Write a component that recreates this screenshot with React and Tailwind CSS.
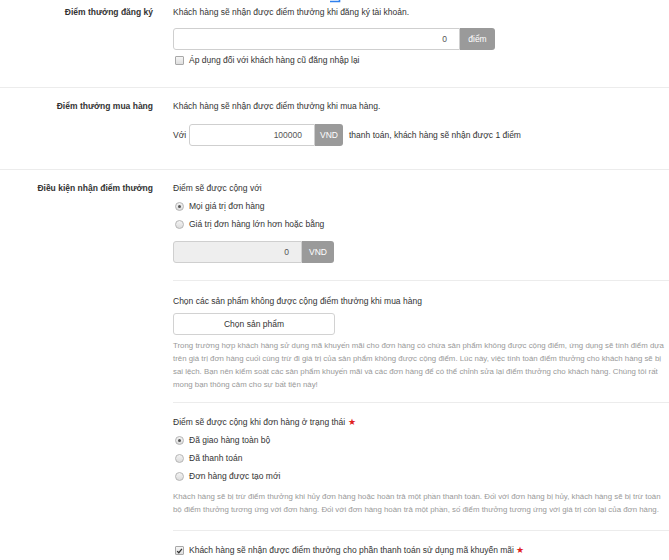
import React from "react";

function Radio({ checked, children }) {
  return (
    <label className="flex items-center h-[13px] gap-[5px]">
      <span className="w-[9px] h-[9px] ml-[2px] rounded-full border border-[#b5b5b5] bg-gradient-to-b from-[#f4f4f4] to-[#dcdcdc] flex items-center justify-center">
        {checked && <span className="w-[3px] h-[3px] rounded-full bg-[#555]" />}
      </span>
      <span>{children}</span>
    </label>
  );
}

function Check({ checked, children }) {
  return (
    <label className="flex items-center h-[13px] gap-[5px]">
      <span className="w-[9px] h-[9px] ml-[2px] rounded-[1px] border border-[#a8a8a8] bg-gradient-to-b from-[#f6f6f6] to-[#dedede] flex items-center justify-center">
        {checked && (
          <svg width="8" height="8" viewBox="0 0 8 8">
            <path d="M1.3 4.2 L3.2 6 L6.8 1.6" fill="none" stroke="#333" strokeWidth="1.4" />
          </svg>
        )}
      </span>
      <span>{children}</span>
    </label>
  );
}

function Addon({ value, unit, inputW, unitW, disabled }) {
  return (
    <div className="flex h-[22px]">
      <div
        className={`${inputW} ${disabled ? "bg-[#eeeeee]" : "bg-white"} border border-[#cfcfcf] rounded-l-[3px] flex items-center justify-end pr-[12px] text-[#555]`}
      >
        {value}
      </div>
      <div className={`${unitW} bg-[#9a9a9a] text-white rounded-r-[3px] flex items-center justify-center`}>
        {unit}
      </div>
    </div>
  );
}

export default function App() {
  return (
    <div className="relative w-[669px] h-[560px] overflow-hidden bg-white text-[8.5px] leading-[13px] text-[#333] font-['Liberation_Sans',Arial,sans-serif]">
      <svg className="absolute left-[330px] top-0" width="11" height="4" viewBox="0 0 11 4">
        <path d="M0 1.5 H9.5 V0" fill="none" stroke="#2f80ed" strokeWidth="1.6" />
      </svg>

      {/* đăng ký */}
      <div className="flex gap-[20px] pt-[6px] pb-[20px] border-b border-[#ececec]">
        <div className="w-[153px] text-right font-bold">Điểm thưởng đăng ký</div>
        <div className="flex-1 flex flex-col">
          <p>Khách hàng sẽ nhận được điểm thưởng khi đăng ký tài khoản.</p>
          <div className="mt-[9px]">
            <Addon value="0" unit="điểm" inputW="w-[287px]" unitW="w-[35px]" />
          </div>
          <div className="mt-[4px]">
            <Check>Áp dụng đối với khách hàng cũ đăng nhập lại</Check>
          </div>
        </div>
      </div>

      {/* mua hàng */}
      <div className="flex gap-[20px] pt-[12px] pb-[23px] border-b border-[#ececec]">
        <div className="w-[153px] text-right font-bold">Điểm thưởng mua hàng</div>
        <div className="flex-1 flex flex-col">
          <p>Khách hàng sẽ nhận được điểm thưởng khi mua hàng.</p>
          <div className="mt-[11px] flex items-center">
            <span className="w-[16px]">Với</span>
            <Addon value="100000" unit="VND" inputW="w-[126px]" unitW="w-[28px]" />
            <span className="ml-[6px]">thanh toán, khách hàng sẽ nhận được 1 điểm</span>
          </div>
        </div>
      </div>

      {/* điều kiện */}
      <div className="flex gap-[20px] pt-[12px]">
        <div className="w-[153px] text-right font-bold">Điều kiện nhận điểm thưởng</div>
        <div className="flex-1 flex flex-col">
          <p>Điểm sẽ được cộng với</p>
          <div className="mt-[5px] flex flex-col gap-[5px]">
            <Radio checked>Mọi giá trị đơn hàng</Radio>
            <Radio>Giá trị đơn hàng lớn hơn hoặc bằng</Radio>
          </div>
          <div className="mt-[10px]">
            <Addon value="0" unit="VND" inputW="w-[129px]" unitW="w-[32px]" disabled />
          </div>

          <div className="mt-[17px] border-t border-[#ececec] pt-[14px]">
            <p>Chọn các sản phẩm không được cộng điểm thưởng khi mua hàng</p>
            <button className="mt-[5px] w-[162px] h-[22px] border border-[#d2d2d2] rounded-[3px] bg-white text-[#333]">
              Chọn sản phẩm
            </button>
            <p className="mt-[4px] pr-[2px] text-[7.85px] text-[#999]">
              Trong trường hợp khách hàng sử dụng mã khuyến mãi cho đơn hàng có chứa sản phẩm không được cộng điểm, ứng dụng sẽ tính điểm dựa trên giá trị đơn hàng cuối cùng trừ đi giá trị của sản phẩm không được cộng điểm. Lúc này, việc tính toán điểm thưởng cho khách hàng sẽ bị sai lệch. Bạn nên kiểm soát các sản phẩm khuyến mãi và các đơn hàng để có thể chỉnh sửa lại điểm thưởng cho khách hàng. Chúng tôi rất mong bạn thông cảm cho sự bất tiện này!
            </p>
          </div>

          <div className="mt-[11px] border-t border-[#ececec] pt-[13px]">
            <p>
              Điểm sẽ được cộng khi đơn hàng ở trạng thái <span className="text-[#e02020]">★</span>
            </p>
            <div className="mt-[5px] flex flex-col gap-[5px]">
              <Radio checked>Đã giao hàng toàn bộ</Radio>
              <Radio>Đã thanh toán</Radio>
              <Radio>Đơn hàng được tạo mới</Radio>
            </div>
            <p className="mt-[7px] pr-[2px] text-[7.85px] text-[#999]">
              Khách hàng sẽ bị trừ điểm thưởng khi hủy đơn hàng hoặc hoàn trả một phần thanh toán. Đối với đơn hàng bị hủy, khách hàng sẽ bị trừ toàn bộ điểm thưởng tương ứng với đơn hàng. Đối với đơn hàng hoàn trả một phần, số điểm thưởng tương ứng với giá trị còn lại của đơn hàng.
            </p>
          </div>

          <div className="mt-[14px] border-t border-[#ececec] pt-[13px]">
            <Check checked>
              Khách hàng sẽ nhận được điểm thưởng cho phần thanh toán sử dụng mã khuyến mãi{" "}
              <span className="text-[#e02020]">★</span>
            </Check>
          </div>
        </div>
      </div>
    </div>
  );
}
